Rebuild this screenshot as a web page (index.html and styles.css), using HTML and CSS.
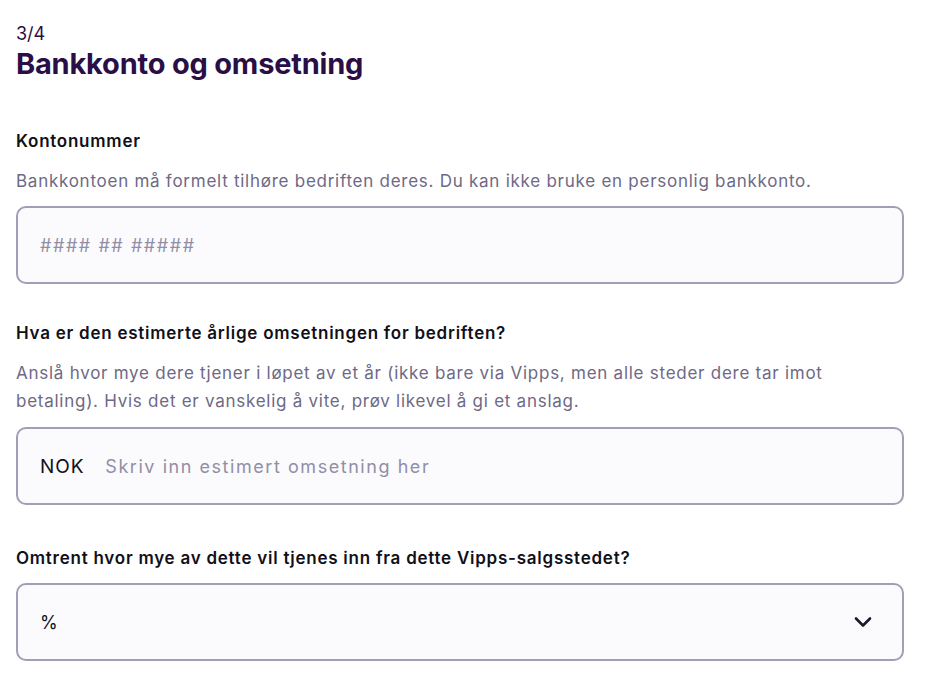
FILE: index.html
```html
<!DOCTYPE html>
<html lang="no">
<head>
<meta charset="utf-8">
<link rel="stylesheet" href="styles.css">
</head>
<body>
<main class="page">
  <div class="step">3/4</div>
  <h1 class="title">Bankkonto og omsetning</h1>

  <section class="field field-first">
    <label class="label">Kontonummer</label>
    <p class="desc">Bankkontoen må formelt tilhøre bedriften deres. Du kan ikke bruke en personlig bankkonto.</p>
    <div class="box">
      <span class="placeholder">#### ## #####</span>
    </div>
  </section>

  <section class="field field-second">
    <label class="label">Hva er den estimerte årlige omsetningen for bedriften?</label>
    <p class="desc">Anslå hvor mye dere tjener i løpet av et år (ikke bare via Vipps, men alle steder dere tar imot betaling). Hvis det er vanskelig å vite, prøv likevel å gi et anslag.</p>
    <div class="box">
      <span class="prefix">NOK</span>
      <span class="placeholder">Skriv inn estimert omsetning her</span>
    </div>
  </section>

  <section class="field field-third">
    <label class="label">Omtrent hvor mye av dette vil tjenes inn fra dette Vipps-salgsstedet?</label>
    <div class="box box-select">
      <span class="value">%</span>
      <svg class="chevron" width="18" height="12" viewBox="0 0 18 12" aria-hidden="true">
        <path d="M2 2.5 L9 9.5 L16 2.5" fill="none" stroke="#1b1a2a" stroke-width="2.6" stroke-linecap="round" stroke-linejoin="round"/>
      </svg>
    </div>
  </section>
</main>
</body>
</html>
```
FILE: styles.css
```css
* { box-sizing: border-box; }
html, body { margin: 0; padding: 0; background: #ffffff; }
body {
  font-family: "Inter", "Noto Sans", sans-serif;
  color: #111018;
}
.page {
  padding: 22px 21px 0 16px;
  width: 925px;
}
.step {
  font-size: 18px;
  line-height: 24px;
  color: #2a0e45;
}
.title {
  margin: 0;
  font-size: 29px;
  line-height: 36px;
  font-weight: 700;
  color: #2a0e45;
  letter-spacing: -0.2px;
}
.field { display: flex; flex-direction: column; }
.field-first { margin-top: 47px; }
.field-second { margin-top: 37px; }
.field-third { margin-top: 41px; }
.label {
  display: block;
  font-size: 17px;
  line-height: 24px;
  font-weight: 600;
  letter-spacing: 0.75px;
  color: #111018;
}
.desc {
  margin: 14px 0 0;
  font-size: 17px;
  line-height: 28px;
  letter-spacing: 0.74px;
  color: #6e6985;
}
.box {
  margin-top: 11px;
  height: 78px;
  border: 2px solid #a29eb6;
  border-radius: 10px;
  background: #fbfbfd;
  display: flex;
  align-items: center;
  padding: 0 22px;
}
.field-second .box { margin-top: 12px; }
.field-third .box { margin-top: 13px; }
.placeholder {
  font-size: 18px;
  letter-spacing: 1.55px;
  color: #928ea5;
}
.prefix {
  font-size: 19px;
  letter-spacing: 0.9px;
  color: #111018;
  margin-right: 21px;
}
.value {
  font-size: 18px;
  color: #111018;
}
.box-select { justify-content: space-between; padding-right: 30px; }
.chevron { display: block; }
```
